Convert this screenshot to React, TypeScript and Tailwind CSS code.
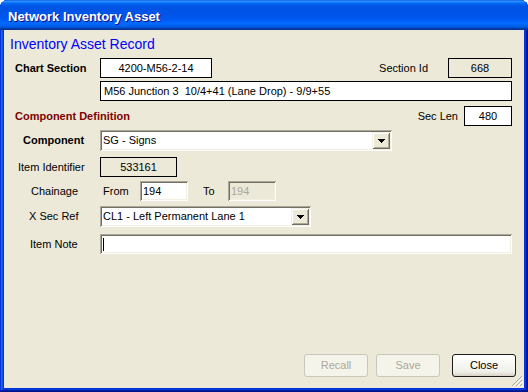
import React from "react";

const sunken =
  "shadow-[inset_1px_1px_0_#ACA899,inset_-1px_-1px_0_#FFFFFF,inset_2px_2px_0_#716F64,inset_-2px_-2px_0_#F1EFE2]";

function Arrow() {
  return (
    <svg width="7" height="4" viewBox="0 0 7 4">
      <path d="M0 0h7v1H0zM1 1h5v1H1zM2 2h3v1H2zM3 3h1v1H3z" fill="#000" />
    </svg>
  );
}

function Combo({ width, text }: { width: string; text: string }) {
  return (
    <div className={`${width} h-[21px] bg-white flex items-stretch p-[2px] ${sunken}`}>
      <div className="flex-1 flex items-center pl-[1px] whitespace-nowrap overflow-hidden">{text}</div>
      <div className="w-[18px] bg-[#ECE9D8] flex items-center justify-center shadow-[inset_1px_1px_0_#F1EFE2,inset_-1px_-1px_0_#716F64,inset_2px_2px_0_#FFFFFF,inset_-2px_-2px_0_#ACA899]">
        <Arrow />
      </div>
    </div>
  );
}

export default function App() {
  return (
    <div className="w-[528px] h-[392px] flex flex-col rounded-t-[8px] bg-[#0831d9] shadow-[inset_-1px_-1px_#00138c,inset_1px_1px_#0831d9,inset_-2px_-2px_#001ea0,inset_2px_2px_#166aee,inset_-3px_-3px_#003bda,inset_3px_3px_#0855dd] font-['Liberation_Sans',Arial,sans-serif]">
      <div className="h-[30px] shrink-0 rounded-t-[8px] bg-[linear-gradient(to_bottom,#0058ee_0%,#3593ff_4%,#288eff_6%,#127dff_8%,#036ffc_10%,#0262ee_14%,#0057e5_20%,#0054e3_24%,#0055eb_56%,#005bf5_66%,#026afe_76%,#0062ef_86%,#0052d6_92%,#0040ab_94%,#003092_100%)] flex items-center pl-[8px] pt-[3px]">
        <span className="text-white font-bold text-[13px] leading-[16px] [text-shadow:1px_1px_0_#0f1089]">
          Network Inventory Asset
        </span>
      </div>
      <div className="flex-1 ml-[4px] mr-[4px] mb-[4px] bg-[#ECE9D8] flex flex-col pr-[12px] relative text-[11px] leading-[13px] text-black">
        <div className="mt-[6px] ml-[6px] h-[16px] leading-[16px] text-[14px] text-[#0000FF]">
          Inventory Asset Record
        </div>

        <div className="mt-[6px] flex h-[20px] items-center">
          <div className="w-[96px] pl-[11px] font-bold">Chart Section</div>
          <div className="w-[112px] h-[20px] border border-black bg-white flex items-center justify-center">
            4200-M56-2-14
          </div>
          <div className="flex-1 text-right pr-[20px]">Section Id</div>
          <div className="w-[64px] h-[20px] border border-black flex items-center justify-center">668</div>
        </div>

        <div className="mt-[3px] flex h-[20px]">
          <div className="w-[96px]" />
          <div className="flex-1 border border-black bg-white flex items-center pl-[3px] whitespace-pre">
            M56 Junction 3  10/4+41 (Lane Drop) - 9/9+55
          </div>
        </div>

        <div className="mt-[5px] flex h-[20px] items-center">
          <div className="pl-[11px] font-bold text-[#800000]">Component Definition</div>
          <div className="flex-1 text-right pr-[6px]">Sec Len</div>
          <div className="w-[48px] h-[20px] border border-black bg-white flex items-center justify-center">480</div>
        </div>

        <div className="mt-[4px] flex h-[21px] items-center">
          <div className="w-[96px] pl-[19px] font-bold">Component</div>
          <Combo width="w-[292px]" text="SG - Signs" />
        </div>

        <div className="mt-[6px] flex h-[20px] items-center">
          <div className="w-[96px] pl-[14px]">Item Identifier</div>
          <div className="w-[77px] h-[20px] border border-black flex items-center justify-center">533161</div>
        </div>

        <div className="mt-[4px] flex h-[20px] items-center">
          <div className="w-[96px] pl-[27px]">Chainage</div>
          <div className="w-[40px] pl-[3px]">From</div>
          <div className={`w-[48px] h-[20px] bg-white flex items-center pl-[3px] ${sunken}`}>194</div>
          <div className="w-[40px] pl-[15px]">To</div>
          <div className={`w-[48px] h-[20px] bg-[#ECE9D8] text-[#ACA899] flex items-center pl-[3px] ${sunken}`}>194</div>
        </div>

        <div className="mt-[5px] flex h-[21px] items-center">
          <div className="w-[96px] pl-[25px]">X Sec Ref</div>
          <Combo width="w-[211px]" text="CL1 - Left Permanent Lane 1" />
        </div>

        <div className="mt-[7px] flex h-[20px] items-center">
          <div className="w-[96px] pl-[26px]">Item Note</div>
          <div className={`flex-1 h-[20px] bg-white flex items-center pl-[3px] ${sunken}`}>
            <div className="w-[1px] h-[13px] bg-black" />
          </div>
        </div>

        <div className="mt-auto flex justify-end -mr-[4px] pb-[11px]">
          <button className="w-[64px] h-[23px] rounded-[3px] border border-[#C9C7BA] bg-[#F5F4EA] text-[#ACA899] text-[11px]">
            Recall
          </button>
          <button className="ml-[8px] w-[64px] h-[23px] rounded-[3px] border border-[#C9C7BA] bg-[#F5F4EA] text-[#ACA899] text-[11px]">
            Save
          </button>
          <button className="ml-[12px] w-[64px] h-[23px] rounded-[3px] border border-[#1C1C1C] bg-[linear-gradient(to_bottom,#FFFFFF,#F0F0EA_80%,#D6D0C5)] text-black text-[11px]">
            Close
          </button>
        </div>

        <svg className="absolute right-[1px] bottom-[1px]" width="12" height="12" viewBox="0 0 12 12">
          <path d="M11 1L1 11M11 5L5 11M11 9L9 11" stroke="#ACA899" strokeWidth="1" />
          <path d="M12 2L2 12M12 6L6 12M12 10L10 12" stroke="#FFFFFF" strokeWidth="1" />
        </svg>
      </div>
    </div>
  );
}
